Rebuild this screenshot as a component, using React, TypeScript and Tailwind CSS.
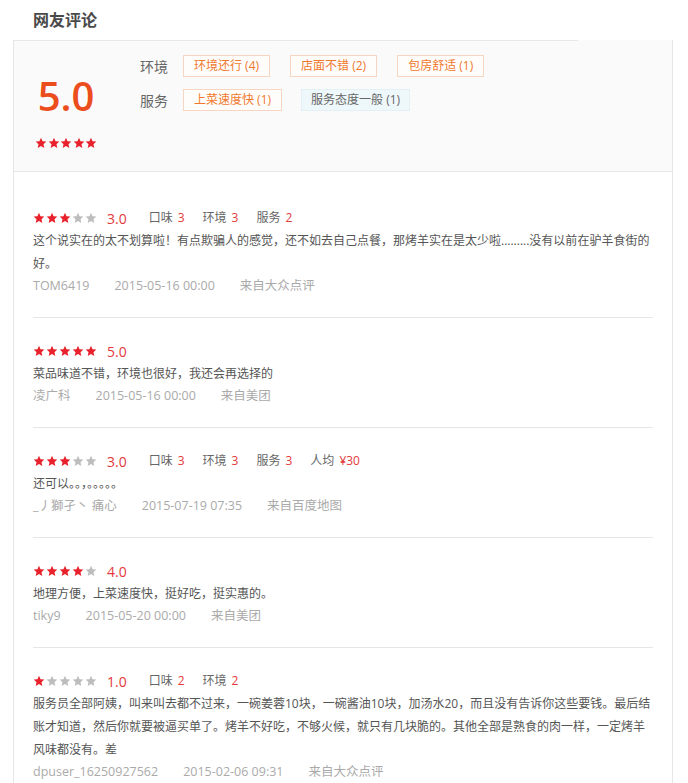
const FONT = { fontFamily: '"Open Sans", "Noto Sans CJK SC", sans-serif' };

function Star({ on }: { on: boolean }) {
  return (
    <svg viewBox="0 0 24 24" className="h-3 w-3 shrink-0">
      <polygon
        points="12,1.5 15.1,8.4 22.6,9.2 17,14.3 18.6,21.8 12,18 5.4,21.8 7,14.3 1.4,9.2 8.9,8.4"
        fill={on ? "#e8222c" : "#bdbdbd"}
      />
    </svg>
  );
}

function Stars({ n }: { n: number }) {
  return (
    <div className="flex gap-px">
      {[1, 2, 3, 4, 5].map((i) => (
        <Star key={i} on={i <= n} />
      ))}
    </div>
  );
}

type Review = {
  stars: number;
  score: string;
  items: [string, string][];
  text: string;
  user: string;
  date: string;
  from: string;
};

const reviews: Review[] = [
  {
    stars: 3,
    score: "3.0",
    items: [
      ["口味", "3"],
      ["环境", "3"],
      ["服务", "2"],
    ],
    text: "这个说实在的太不划算啦！有点欺骗人的感觉，还不如去自己点餐，那烤羊实在是太少啦.........没有以前在驴羊食街的好。",
    user: "TOM6419",
    date: "2015-05-16 00:00",
    from: "来自大众点评",
  },
  {
    stars: 5,
    score: "5.0",
    items: [],
    text: "菜品味道不错，环境也很好，我还会再选择的",
    user: "凌广科",
    date: "2015-05-16 00:00",
    from: "来自美团",
  },
  {
    stars: 3,
    score: "3.0",
    items: [
      ["口味", "3"],
      ["环境", "3"],
      ["服务", "3"],
      ["人均", "¥30"],
    ],
    text: "还可以。。，。。。。。",
    user: "_丿獅孑丶 痛心",
    date: "2015-07-19 07:35",
    from: "来自百度地图",
  },
  {
    stars: 4,
    score: "4.0",
    items: [],
    text: "地理方便，上菜速度快，挺好吃，挺实惠的。",
    user: "tiky9",
    date: "2015-05-20 00:00",
    from: "来自美团",
  },
  {
    stars: 1,
    score: "1.0",
    items: [
      ["口味", "2"],
      ["环境", "2"],
    ],
    text: "服务员全部阿姨，叫来叫去都不过来，一碗姜蓉10块，一碗酱油10块，加汤水20，而且没有告诉你这些要钱。最后结账才知道，然后你就要被逼买单了。烤羊不好吃，不够火候，就只有几块脆的。其他全部是熟食的肉一样，一定烤羊风味都没有。差",
    user: "dpuser_16250927562",
    date: "2015-02-06 09:31",
    from: "来自大众点评",
  },
];

function Tag({ label, blue }: { label: string; blue?: boolean }) {
  return (
    <span
      className={
        blue
          ? "inline-flex h-[22px] items-center border border-[#e3f1f6] bg-[#eef7fa] px-[9px] text-[12px] text-[#666]"
          : "inline-flex h-[22px] items-center border border-[#f6d5c1] bg-[#fffdfb] px-[10px] text-[12px] text-[#f0782d]"
      }
    >
      {label}
    </span>
  );
}

export default function App() {
  return (
    <div className="w-[688px] bg-white pb-4" style={FONT}>
      <div className="h-[40px] pl-[33px] pt-[8px] text-[16px] font-semibold text-[#4a4a4a]">
        网友评论
      </div>

      <div className="ml-[13px] w-[660px] border-x border-[#e6e6e6]">
        <div className="relative h-[132px] border-b border-[#e6e6e6] bg-[#fafafa]">
          <div className="absolute left-0 top-0 h-px w-[564px] bg-[#e8e8e8]" />
          <div className="flex pt-[15px]">
            <div className="ml-[21px] mt-[18px] flex w-[62px] flex-col items-center">
              <div className="text-[40px] font-semibold leading-[46px] text-[#ec4d1c]">5.0</div>
              <div className="mt-[18px] flex gap-[0.5px]">
                {[1, 2, 3, 4, 5].map((i) => (
                  <Star key={i} on />
                ))}
              </div>
            </div>
            <div className="ml-[43px] flex flex-col gap-[12px]">
              <div className="flex items-center">
                <span className="w-[43px] text-[14px] text-[#666]">环境</span>
                <div className="flex gap-[20px]">
                  <Tag label="环境还行 (4)" />
                  <Tag label="店面不错 (2)" />
                  <Tag label="包房舒适 (1)" />
                </div>
              </div>
              <div className="flex items-center">
                <span className="w-[43px] text-[14px] text-[#666]">服务</span>
                <div className="flex gap-[19px]">
                  <Tag label="上菜速度快 (1)" />
                  <Tag label="服务态度一般 (1)" blue />
                </div>
              </div>
            </div>
          </div>
        </div>

        <div className="px-[19px] pt-[13px]">
          {reviews.map((r, idx) => (
            <div
              key={idx}
              className={
                idx === reviews.length - 1
                  ? "pt-[22px] pb-[10px]"
                  : "border-b border-[#e6e6e6] pt-[22px] pb-[20px]"
              }
            >
              <div className="flex h-[22px] items-center text-[12px] text-[#666]">
                <Stars n={r.stars} />
                <span className="ml-[10px] text-[14px] text-[#e4393c]">{r.score}</span>
                {r.items.map(([k, v], i) => (
                  <span key={k} className={i === 0 ? "ml-[22px]" : "ml-[18px]"}>
                    {k}
                    <span className="ml-[5px] text-[#e4393c]">{v}</span>
                  </span>
                ))}
              </div>
              <p className="text-[12px] leading-[23px] text-[#555]">{r.text}</p>
              <div className="flex gap-[25px] text-[12.5px] leading-[22px] text-[#aaa]">
                <span>{r.user}</span>
                <span>{r.date}</span>
                <span>{r.from}</span>
              </div>
            </div>
          ))}
        </div>
      </div>
    </div>
  );
}
